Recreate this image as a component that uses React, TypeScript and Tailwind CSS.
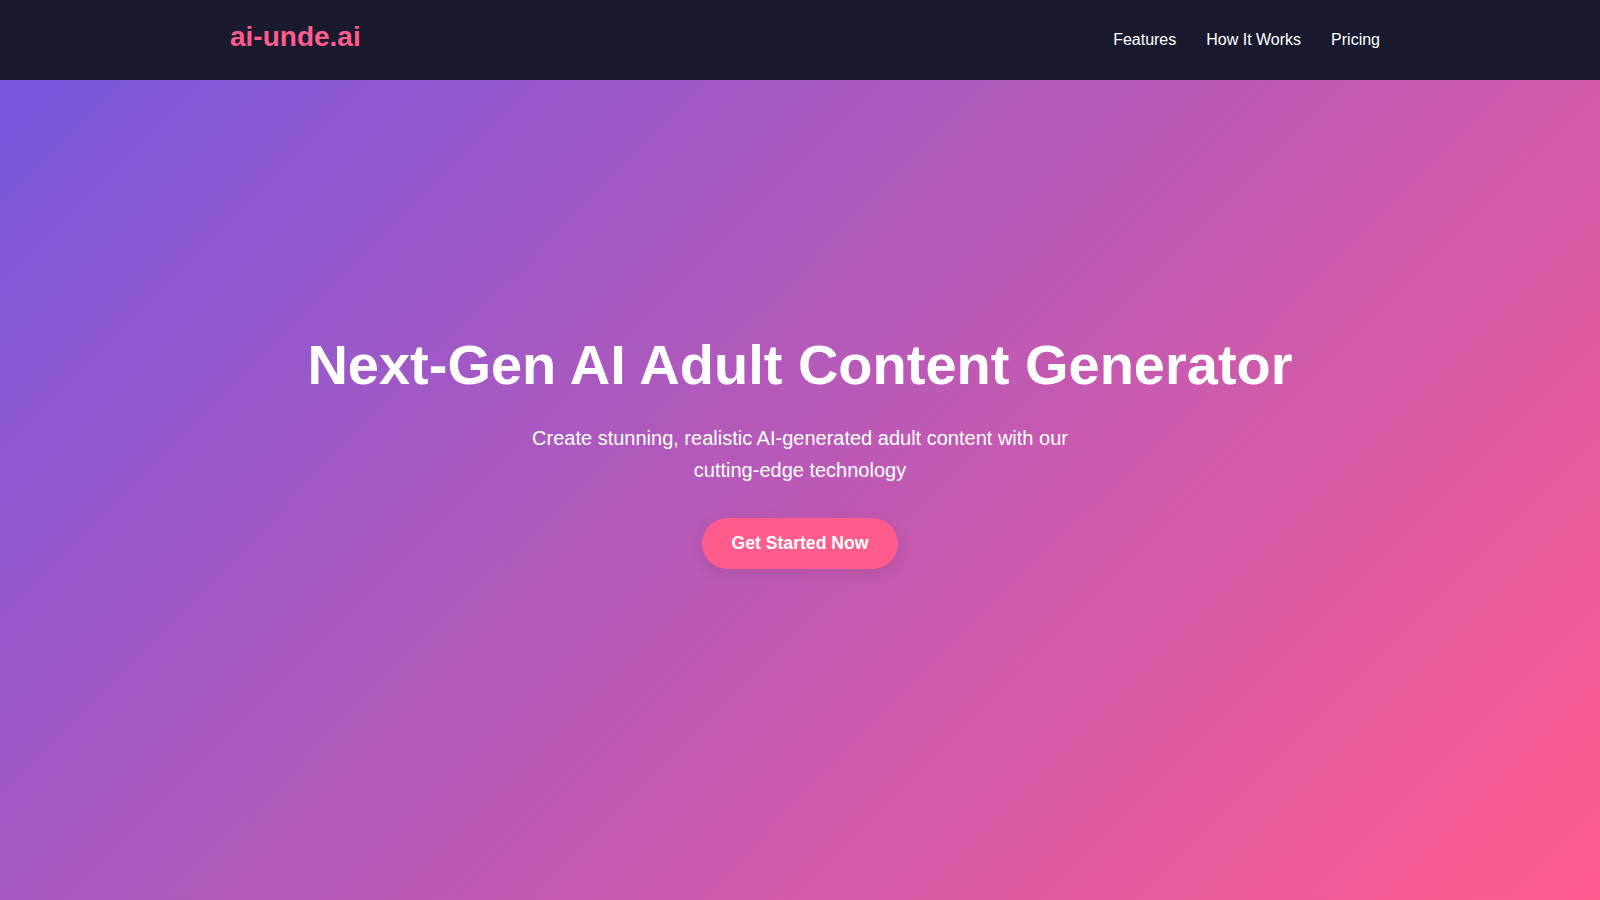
export default function App() {
  const links = ['Features', 'How It Works', 'Pricing'];

  return (
    <div className="min-h-screen font-['Liberation_Sans',Arial,sans-serif]">
      {/* Fixed top bar sits over the hero */}
      <header className="fixed inset-x-0 top-0 z-10 h-20 bg-[#1a1a2e]">
        <div className="flex h-full items-center justify-between pl-[230px] pr-[220px]">
          <a href="#" className="pb-[6px] text-[28px] font-bold text-[#ff5c8e]">
            ai-unde.ai
          </a>
          <nav className="flex items-center gap-[30px]">
            {links.map((link) => (
              <a key={link} href="#" className="text-base text-white">
                {link}
              </a>
            ))}
          </nav>
        </div>
      </header>

      <section className="flex h-screen items-center justify-center bg-[linear-gradient(135deg,#7357e0_0%,#ff5c8e_100%)] px-5 text-center text-white">
        <div className="flex flex-col items-center">
          <h1 className="text-[56px] font-bold leading-[1.2]">
            Next-Gen AI Adult Content Generator
          </h1>
          <p className="mt-6 max-w-[600px] text-[20px] leading-[1.6]">
            Create stunning, realistic AI-generated adult content with our cutting-edge technology
          </p>
          <a
            href="#"
            className="mt-8 rounded-full bg-[#ff5c8e] px-[30px] py-[15px] text-[17.6px] font-bold leading-[1.2] text-white shadow-[0_4px_15px_rgba(0,0,0,0.1)]"
          >
            Get Started Now
          </a>
        </div>
      </section>
    </div>
  );
}
